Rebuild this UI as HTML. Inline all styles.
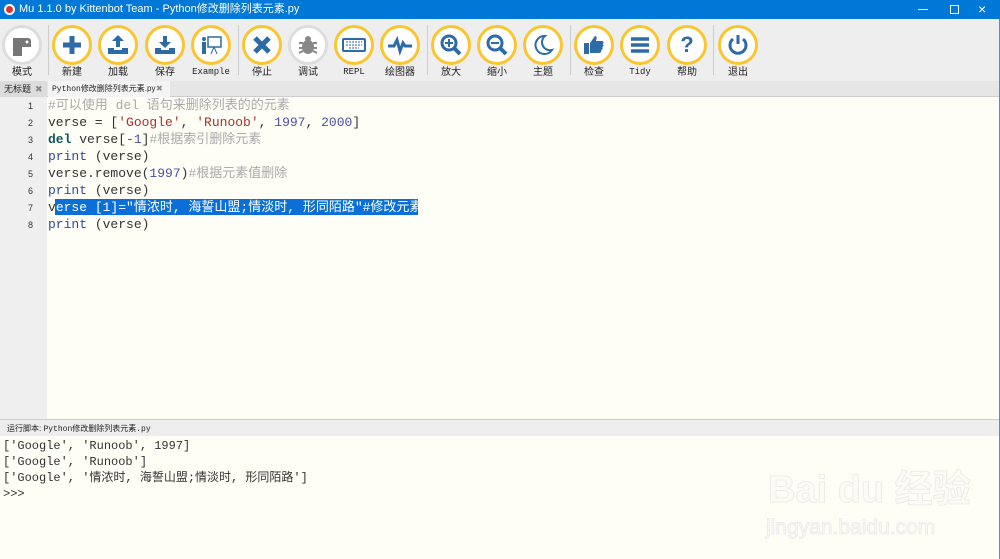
<!DOCTYPE html>
<html><head><meta charset="utf-8"><style>
*{margin:0;padding:0;box-sizing:border-box}
body{width:1000px;height:559px;overflow:hidden;background:#eeeeee;font-family:"Liberation Sans","Noto Sans CJK SC",sans-serif;position:relative}
.title{position:absolute;left:0;top:0;width:1000px;height:19px;background:#0078d7;color:#fff;font-size:11px;line-height:19px}
.btn{position:absolute;top:25px;width:40px;height:40px;border-radius:50%;background:#fff;border:3px solid #f9c632;display:flex;align-items:center;justify-content:center}
.lbl{position:absolute;top:66px;font-size:10px;line-height:13px;color:#222;width:60px;text-align:center}
.mono{font-family:"Liberation Mono","Noto Sans CJK SC",monospace}
.sep{position:absolute;top:25px;width:1px;height:50px;background:#ccc}
.tabs{position:absolute;top:81px;left:0;width:1000px;height:16px;background:#e6e6e6;border-bottom:1px solid #ccc}
.tab{position:absolute;top:0;height:16px;font-size:9px;line-height:16px;padding-left:4px;color:#222;overflow:hidden;white-space:nowrap}
.ed{position:absolute;top:97px;left:0;width:1000px;height:322px;background:#fefdf6}
.gut{position:absolute;left:0;top:0;width:47px;height:322px;background:#efefef}
.ln{position:absolute;left:0;width:33px;text-align:right;font-size:9px;line-height:17px;color:#333}
.cl{position:absolute;left:48px;font-size:13px;line-height:17px;height:17px;white-space:pre;color:#333}
.cm{color:#aaa}.st{color:#a5332f}.nu{color:#4b4fa6}.kw{color:#0f5b5b;font-weight:bold}.bi{color:#2b4ba6}
.status{position:absolute;top:419px;left:0;width:1000px;height:17px;background:#eee;border-top:1px solid #ccc;font-size:8px;line-height:17px;padding-left:7px;color:#222}
.out{position:absolute;top:436px;left:0;width:1000px;height:123px;background:#fefdf6}
.ol{position:absolute;left:3px;font-size:12px;line-height:16px;height:16px;white-space:pre;color:#333}
</style></head><body>
<div class="title"><span style="position:absolute;left:4px;top:4px;width:11px;height:11px;border-radius:50%;background:#fff"><span style="position:absolute;left:2px;top:2px;width:7px;height:7px;border-radius:50%;background:#d33"></span></span><span style="position:absolute;left:19px">Mu 1.1.0 by Kittenbot Team - Python修改删除列表元素.py</span>
<span style="position:absolute;left:918px;top:9px;width:10px;height:1px;background:#fff"></span>
<span style="position:absolute;left:950px;top:5px;width:9px;height:9px;border:1px solid #fff"></span>
<span style="position:absolute;left:978px;top:0;font-size:14px">×</span></div>
<div class="sep" style="left:48px"></div><div class="sep" style="left:238px"></div><div class="sep" style="left:427px"></div><div class="sep" style="left:570px"></div><div class="sep" style="left:713px"></div>
<div class="btn" style="left:2px;border-color:#ddd"><svg width="24" height="24"><path d="M3 5h15a3 3 0 0 1 3 3v6h-9v9H3z" fill="#777"/><circle cx="17" cy="9" r="1.5" fill="#fff"/></svg></div>
<div class="btn" style="left:52px"><svg width="24" height="24"><path d="M12 3v18M3 12h18" stroke="#2e6aa6" stroke-width="5"/></svg></div>
<div class="btn" style="left:98px"><svg width="24" height="24"><path d="M12 2l-6 6h4v6h4V8h4z" fill="#2e6aa6"/><path d="M2 15h6v2h8v-2h6v6H2z" fill="#2e6aa6"/></svg></div>
<div class="btn" style="left:145px"><svg width="24" height="24"><path d="M12 15l-6-6h4V3h4v6h4z" fill="#2e6aa6"/><path d="M2 15h6v2h8v-2h6v6H2z" fill="#2e6aa6"/></svg></div>
<div class="btn" style="left:191px"><svg width="24" height="24"><rect x="9" y="4" width="13" height="10" fill="none" stroke="#2e6aa6" stroke-width="1.5"/><circle cx="5" cy="6" r="2" fill="#2e6aa6"/><path d="M3 9h4v12H3z" fill="#2e6aa6"/><path d="M15 14l-3 7M15 14l3 7" stroke="#2e6aa6"/></svg></div>
<div class="btn" style="left:242px"><svg width="24" height="24"><path d="M5 5l14 14M19 5L5 19" stroke="#2e6aa6" stroke-width="5"/></svg></div>
<div class="btn" style="left:288px;border-color:#ddd"><svg width="24" height="24"><ellipse cx="12" cy="14" rx="6" ry="7" fill="#888"/><circle cx="12" cy="6" r="3" fill="#888"/><path d="M3 10h4M3 15h4M3 20l4-2M21 10h-4M21 15h-4M21 20l-4-2" stroke="#888" stroke-width="2"/></svg></div>
<div class="btn" style="left:334px"><svg width="26" height="24"><rect x="2" y="6" width="22" height="12" rx="1" fill="none" stroke="#2e6aa6" stroke-width="2"/><path d="M5 9h16M5 12h16M8 15h10" stroke="#2e6aa6" stroke-dasharray="2 1"/></svg></div>
<div class="btn" style="left:380px"><svg width="26" height="24"><path d="M1 13h6l3-6 3 11 3-8 2 3h7" fill="none" stroke="#2e6aa6" stroke-width="3"/></svg></div>
<div class="btn" style="left:431px"><svg width="24" height="24"><circle cx="10" cy="10" r="7" fill="none" stroke="#2e6aa6" stroke-width="3"/><path d="M15 15l6 6" stroke="#2e6aa6" stroke-width="4"/><path d="M10 6v8M6 10h8" stroke="#2e6aa6" stroke-width="2"/></svg></div>
<div class="btn" style="left:477px"><svg width="24" height="24"><circle cx="10" cy="10" r="7" fill="none" stroke="#2e6aa6" stroke-width="3"/><path d="M15 15l6 6" stroke="#2e6aa6" stroke-width="4"/><path d="M6 10h8" stroke="#2e6aa6" stroke-width="2"/></svg></div>
<div class="btn" style="left:523px"><svg width="24" height="24"><path d="M14 3a9 9 0 1 0 7 14a8 8 0 0 1-7-14z" fill="none" stroke="#2e6aa6" stroke-width="2"/></svg></div>
<div class="btn" style="left:574px"><svg width="24" height="24"><rect x="2" y="10" width="5" height="11" fill="#2e6aa6"/><path d="M8 10l5-7c2 0 2 2 1 5h6c2 0 2 3 0 3c2 0 2 3 0 3c1 0 1 3-1 3c1 1 0 3-2 3H8z" fill="#2e6aa6"/></svg></div>
<div class="btn" style="left:620px"><svg width="24" height="24"><path d="M3 6h18M3 12h18M3 18h18" stroke="#2e6aa6" stroke-width="3.5"/></svg></div>
<div class="btn" style="left:667px"><span style="color:#2e6aa6;font-weight:bold;font-size:22px">?</span></div>
<div class="btn" style="left:718px"><svg width="24" height="24"><path d="M7 6a8 8 0 1 0 10 0" fill="none" stroke="#2e6aa6" stroke-width="3"/><path d="M12 2v9" stroke="#2e6aa6" stroke-width="3"/></svg></div>
<div class="lbl" style="left:-8px">模式</div><div class="lbl" style="left:42px">新建</div><div class="lbl" style="left:88px">加载</div><div class="lbl" style="left:135px">保存</div><div class="lbl mono" style="left:181px;font-size:9px">Example</div><div class="lbl" style="left:232px">停止</div><div class="lbl" style="left:278px">调试</div><div class="lbl mono" style="left:324px;font-size:9px">REPL</div><div class="lbl" style="left:370px">绘图器</div><div class="lbl" style="left:421px">放大</div><div class="lbl" style="left:467px">缩小</div><div class="lbl" style="left:513px">主题</div><div class="lbl" style="left:564px">检查</div><div class="lbl mono" style="left:610px;font-size:9px">Tidy</div><div class="lbl" style="left:657px">帮助</div><div class="lbl" style="left:708px">退出</div>
<div class="tabs">
<div class="tab" style="left:0;width:47px;background:#dcdcdc">无标题 <span style="position:absolute;left:35px;color:#888">✖</span></div>
<div class="tab" style="left:48px;width:122px;background:#f4f4f4;font-size:8px"><span class="mono">Python</span>修改删除列表元素.py <span style="position:absolute;left:108px;color:#888">✖</span></div>
</div>
<div class="ed"><div class="gut"></div>
<div class="ln" style="top:1px">1</div><div class="ln" style="top:18px">2</div><div class="ln" style="top:35px">3</div><div class="ln" style="top:52px">4</div><div class="ln" style="top:69px">5</div><div class="ln" style="top:86px">6</div><div class="ln" style="top:103px">7</div><div class="ln" style="top:120px">8</div>
<div style="position:absolute;left:55px;top:102px;width:363px;height:16px;background:#0a6fd6"></div>
<div class="cl mono" style="top:0px"><span class="cm">#可以使用 del 语句来删除列表的的元素</span></div>
<div class="cl mono" style="top:17px">verse = [<span class="st">'Google'</span>, <span class="st">'Runoob'</span>, <span class="nu">1997</span>, <span class="nu">2000</span>]</div>
<div class="cl mono" style="top:34px"><span class="kw">del</span> verse[<span class="nu">-1</span>]<span class="cm">#根据索引删除元素</span></div>
<div class="cl mono" style="top:51px"><span class="bi">print</span> (verse)</div>
<div class="cl mono" style="top:68px">verse.remove(<span class="nu">1997</span>)<span class="cm">#根据元素值删除</span></div>
<div class="cl mono" style="top:85px"><span class="bi">print</span> (verse)</div>
<div class="cl mono" style="top:102px">v<span style="color:#fff">erse [1]="情浓时, 海誓山盟;情淡时, 形同陌路"#修改元素</span></div>
<div class="cl mono" style="top:119px"><span class="bi">print</span> (verse)</div>
</div>
<div class="status">运行脚本: <span class="mono">Python修改删除列表元素.py</span></div>
<div class="out">
<div class="ol mono" style="top:2px">['Google', 'Runoob', 1997]</div>
<div class="ol mono" style="top:18px">['Google', 'Runoob']</div>
<div class="ol mono" style="top:34px">['Google', '情浓时, 海誓山盟;情淡时, 形同陌路']</div>
<div class="ol mono" style="top:50px">&gt;&gt;&gt;</div>
<div style="position:absolute;left:768px;top:34px;font-size:38px;line-height:40px;font-weight:bold;color:#fcfcf4;-webkit-text-stroke:1px #ececec">Bai du 经验</div>
<div style="position:absolute;left:766px;top:80px;font-size:21px;line-height:24px;color:#fcfcf4;-webkit-text-stroke:1px #ececec">jingyan.baidu.com</div>
</div>
<div style="position:absolute;right:0;top:19px;width:1px;height:540px;background:#4a8fd8"></div>
</body></html>
